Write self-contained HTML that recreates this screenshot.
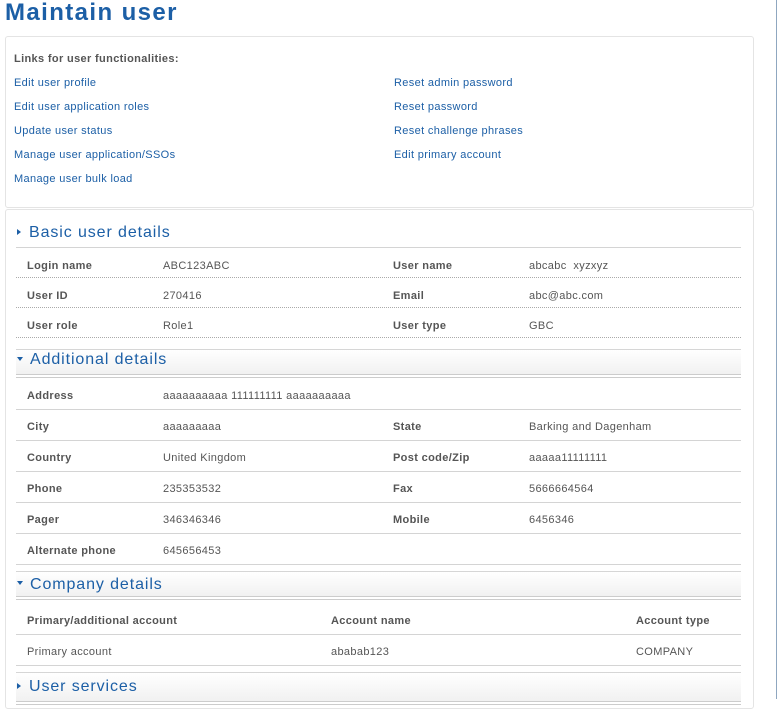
<!DOCTYPE html>
<html><head><style>
*{margin:0;padding:0;box-sizing:border-box}
body{width:777px;height:699px;overflow:hidden;background:#fff;font-family:"Liberation Sans",sans-serif;font-size:11px;letter-spacing:0.35px;color:#555;position:relative}
.a{position:absolute;white-space:nowrap}
h1{position:absolute;left:5px;top:-1px;font-size:24px;font-weight:bold;color:#1c5fa6;letter-spacing:1.4px}
.lnk{color:#1c5fa6}
.b{font-weight:bold;color:#555}
.panel{position:absolute;border:1px solid #e4e4e4;border-radius:3px;background:#fff}
.hd{position:absolute;font-size:16px;color:#1c5fa6;letter-spacing:0.9px}
.sep{position:absolute;left:16px;width:725px;height:0;border-top:1px solid #d4d4d4}
.dot{position:absolute;left:16px;width:725px;height:0;border-top:1px dotted #aaa}
.gbar{position:absolute;left:16px;width:725px;height:26px;border-top:1px solid #d6d6d6;background:linear-gradient(#fff,#f1f1f1);border-bottom:1px solid #ccc}
.gbar:after{content:"";position:absolute;left:0;right:0;bottom:-4px;border-top:1px solid #ccc}
.tri{position:absolute;width:0;height:0}
.tr{border-top:3.5px solid transparent;border-bottom:3.5px solid transparent;border-left:4px solid #1c5fa6}
.td{border-left:3.5px solid transparent;border-right:3.5px solid transparent;border-top:4px solid #1c5fa6}
</style></head><body>
<h1>Maintain user</h1>
<div style="position:absolute;left:776px;top:0;width:1px;height:699px;background:#8fa7c0"></div>
<div class="panel" style="left:5px;top:36px;width:749px;height:172px"></div>
<div class="panel" style="left:5px;top:209px;width:749px;height:500px"></div>
<div class="a b" style="left:14px;top:53px">Links for user functionalities:</div>
<div class="a lnk" style="left:14px;top:77px">Edit user profile</div>
<div class="a lnk" style="left:14px;top:101px">Edit user application roles</div>
<div class="a lnk" style="left:14px;top:125px">Update user status</div>
<div class="a lnk" style="left:14px;top:149px">Manage user application/SSOs</div>
<div class="a lnk" style="left:14px;top:173px">Manage user bulk load</div>
<div class="a lnk" style="left:394px;top:77px">Reset admin password</div>
<div class="a lnk" style="left:394px;top:101px">Reset password</div>
<div class="a lnk" style="left:394px;top:125px">Reset challenge phrases</div>
<div class="a lnk" style="left:394px;top:149px">Edit primary account</div>

<div class="tri tr" style="left:17px;top:229px"></div>
<div class="hd a" style="left:29px;top:224px">Basic user details</div>
<div class="sep" style="top:247px"></div>
<div class="a b" style="left:27px;top:260px">Login name</div><div class="a" style="left:163px;top:260px">ABC123ABC</div>
<div class="a b" style="left:393px;top:260px">User name</div><div class="a" style="left:529px;top:260px">abcabc&nbsp; xyzxyz</div>
<div class="dot" style="top:277px"></div>
<div class="a b" style="left:27px;top:290px">User ID</div><div class="a" style="left:163px;top:290px">270416</div>
<div class="a b" style="left:393px;top:290px">Email</div><div class="a" style="left:529px;top:290px">abc@abc.com</div>
<div class="dot" style="top:307px"></div>
<div class="a b" style="left:27px;top:320px">User role</div><div class="a" style="left:163px;top:320px">Role1</div>
<div class="a b" style="left:393px;top:320px">User type</div><div class="a" style="left:529px;top:320px">GBC</div>
<div class="dot" style="top:337px"></div>

<div class="gbar" style="top:349px"></div>
<div class="tri td" style="left:17px;top:357px"></div>
<div class="hd a" style="left:30px;top:351px">Additional details</div>
<div class="a b" style="left:27px;top:390px">Address</div><div class="a" style="left:163px;top:390px">aaaaaaaaaa 111111111 aaaaaaaaaa</div>
<div class="sep" style="top:409px"></div>
<div class="a b" style="left:27px;top:421px">City</div><div class="a" style="left:163px;top:421px">aaaaaaaaa</div>
<div class="a b" style="left:393px;top:421px">State</div><div class="a" style="left:529px;top:421px">Barking and Dagenham</div>
<div class="sep" style="top:440px"></div>
<div class="a b" style="left:27px;top:452px">Country</div><div class="a" style="left:163px;top:452px">United Kingdom</div>
<div class="a b" style="left:393px;top:452px">Post code/Zip</div><div class="a" style="left:529px;top:452px">aaaaa11111111</div>
<div class="sep" style="top:471px"></div>
<div class="a b" style="left:27px;top:483px">Phone</div><div class="a" style="left:163px;top:483px">235353532</div>
<div class="a b" style="left:393px;top:483px">Fax</div><div class="a" style="left:529px;top:483px">5666664564</div>
<div class="sep" style="top:502px"></div>
<div class="a b" style="left:27px;top:514px">Pager</div><div class="a" style="left:163px;top:514px">346346346</div>
<div class="a b" style="left:393px;top:514px">Mobile</div><div class="a" style="left:529px;top:514px">6456346</div>
<div class="sep" style="top:533px"></div>
<div class="a b" style="left:27px;top:545px">Alternate phone</div><div class="a" style="left:163px;top:545px">645656453</div>
<div class="sep" style="top:564px"></div>

<div class="gbar" style="top:571px"></div>
<div class="tri td" style="left:17px;top:581px"></div>
<div class="hd a" style="left:30px;top:576px">Company details</div>
<div class="a b" style="left:27px;top:615px">Primary/additional account</div>
<div class="a b" style="left:331px;top:615px">Account name</div>
<div class="a b" style="left:636px;top:615px">Account type</div>
<div class="sep" style="top:634px"></div>
<div class="a" style="left:27px;top:646px">Primary account</div>
<div class="a" style="left:331px;top:646px">ababab123</div>
<div class="a" style="left:636px;top:646px">COMPANY</div>
<div class="sep" style="top:665px"></div>

<div class="gbar" style="top:672px;height:30px"></div>
<div class="tri tr" style="left:17px;top:683px"></div>
<div class="hd a" style="left:29px;top:678px">User services</div>
</body></html>
